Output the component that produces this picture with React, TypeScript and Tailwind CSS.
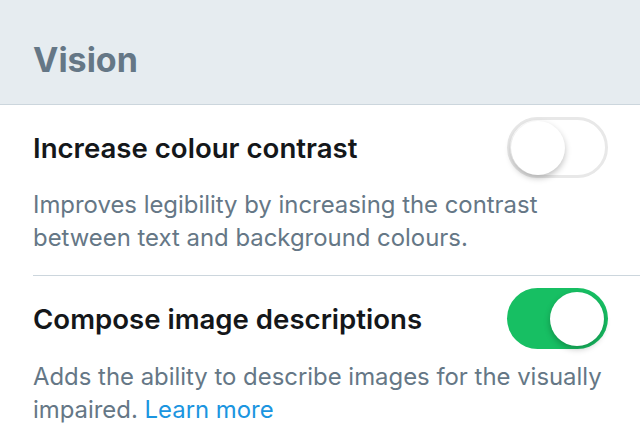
import { useState } from "react";

const font = { fontFamily: "Inter, 'Noto Sans', sans-serif" };

function Toggle({ on, onClick }: { on: boolean; onClick: () => void }) {
  return (
    <button
      onClick={onClick}
      className={`relative w-[101px] h-[61px] shrink-0 rounded-full transition-colors ${
        on ? "bg-[#17bf63]" : "bg-white border-[3px] border-[#e8e8e8]"
      }`}
    >
      <span
        className={`absolute top-1/2 -translate-y-1/2 w-[54px] h-[54px] rounded-full bg-white shadow-[0_3px_6px_rgba(0,0,0,0.25)] ${
          on ? "right-[4px]" : "left-[1px]"
        }`}
      />
    </button>
  );
}

function Row({
  title,
  children,
  on,
  onToggle,
  descPt,
}: {
  title: string;
  children: React.ReactNode;
  on: boolean;
  onToggle: () => void;
  descPt: string;
}) {
  return (
    <div className="pl-[33px]">
      <div className="flex items-center justify-between pr-[32px] pt-[12px]">
        <div className="text-[27.6px] leading-[32px] font-semibold text-[#14171a]">
          {title}
        </div>
        <Toggle on={on} onClick={onToggle} />
      </div>
      <div
        className={`pr-[30px] ${descPt} pb-[21px] text-[23.9px] leading-[33px] text-[#657786]`}
      >
        {children}
      </div>
    </div>
  );
}

export default function App() {
  const [contrast, setContrast] = useState(false);
  const [describe, setDescribe] = useState(true);

  return (
    <div className="w-[640px] h-[446px] bg-white overflow-hidden" style={font}>
      <div className="h-[105px] bg-[#e6ecf0] border-b border-[#ccd6dd] flex items-center px-[33px] pt-[14px]">
        <h1 className="text-[34px] font-bold text-[#657786]">Vision</h1>
      </div>
      <Row
        title="Increase colour contrast"
        on={contrast}
        onToggle={() => setContrast(!contrast)}
        descPt="pt-[10px]"
      >
        Improves legibility by increasing the contrast between text and
        background colours.
      </Row>
      <div className="ml-[33px] border-t border-[#ccd6dd]" />
      <Row
        title="Compose image descriptions"
        on={describe}
        onToggle={() => setDescribe(!describe)}
        descPt="pt-[11px]"
      >
        Adds the ability to describe images for the visually impaired.{" "}
        <a className="text-[#1b95e0]">Learn more</a>
      </Row>
    </div>
  );
}
